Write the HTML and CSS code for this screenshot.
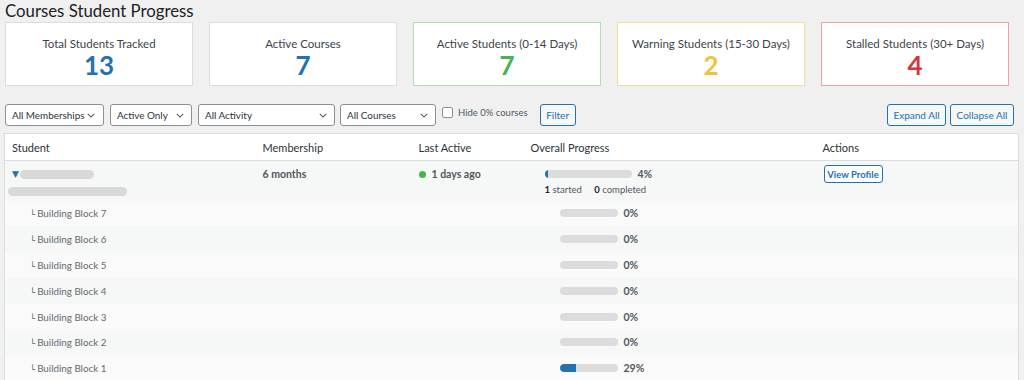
FILE: index.html
```html
<!DOCTYPE html>
<html>
<head>
<meta charset="utf-8">
<link rel="stylesheet" href="styles.css">
</head>
<body>
<div class="page">
  <h1 class="title">Courses Student Progress</h1>
  <div class="cards">
    <div class="card"><div class="card-label">Total Students Tracked</div><div class="card-num num-blue">13</div></div>
    <div class="card"><div class="card-label">Active Courses</div><div class="card-num num-blue">7</div></div>
    <div class="card card-green"><div class="card-label">Active Students (0-14 Days)</div><div class="card-num num-green">7</div></div>
    <div class="card card-yellow"><div class="card-label">Warning Students (15-30 Days)</div><div class="card-num num-yellow">2</div></div>
    <div class="card card-red"><div class="card-label">Stalled Students (30+ Days)</div><div class="card-num num-red">4</div></div>
  </div>
  <div class="toolbar">
    <div class="filters">
      <div class="select sel-1"><span>All Memberships</span><svg class="chev" viewBox="0 0 10 6"><path d="M1 1l4 4 4-4" fill="none" stroke="#50575e" stroke-width="1.3"/></svg></div>
      <div class="select sel-2"><span>Active Only</span><svg class="chev" viewBox="0 0 10 6"><path d="M1 1l4 4 4-4" fill="none" stroke="#50575e" stroke-width="1.3"/></svg></div>
      <div class="select sel-3"><span>All Activity</span><svg class="chev" viewBox="0 0 10 6"><path d="M1 1l4 4 4-4" fill="none" stroke="#50575e" stroke-width="1.3"/></svg></div>
      <div class="select sel-4"><span>All Courses</span><svg class="chev" viewBox="0 0 10 6"><path d="M1 1l4 4 4-4" fill="none" stroke="#50575e" stroke-width="1.3"/></svg></div>
      <label class="check"><span class="box"></span><span>Hide 0% courses</span></label>
      <button class="btn btn-filter">Filter</button>
    </div>
    <div class="toggles">
      <button class="btn btn-expand">Expand All</button>
      <button class="btn btn-collapse">Collapse All</button>
    </div>
  </div>
  <table class="grid">
    <colgroup>
      <col class="c-student"><col class="c-member"><col class="c-last"><col class="c-prog"><col class="c-act">
    </colgroup>
    <thead>
      <tr><th>Student</th><th>Membership</th><th>Last Active</th><th>Overall Progress</th><th>Actions</th></tr>
    </thead>
    <tbody>
      <tr class="main-row">
        <td class="student-cell">
          <div class="name-line"><span class="tri">&#9660;</span><span class="pill pill-a"></span></div>
          <div class="pill pill-b"></div>
        </td>
        <td class="member">6 months</td>
        <td class="last"><span class="dot"></span>1 days ago</td>
        <td class="prog">
          <div class="prog-line main-prog"><div class="bar bar-main"><div class="fill" style="width:4%"></div></div><span class="pct">4%</span></div>
          <div class="counts"><b>1</b> started <b class="gap">0</b> completed</div>
        </td>
        <td class="act"><button class="btn btn-view">View Profile</button></td>
      </tr>
      <tr class="sub odd"><td class="course"><span class="corner">&#9492;</span>Building Block 7</td><td></td><td></td><td><div class="prog-line sub-prog"><div class="bar bar-sub"><div class="fill" style="width:0%"></div></div><span class="pct">0%</span></div></td><td></td></tr>
      <tr class="sub even"><td class="course"><span class="corner">&#9492;</span>Building Block 6</td><td></td><td></td><td><div class="prog-line sub-prog"><div class="bar bar-sub"><div class="fill" style="width:0%"></div></div><span class="pct">0%</span></div></td><td></td></tr>
      <tr class="sub odd"><td class="course"><span class="corner">&#9492;</span>Building Block 5</td><td></td><td></td><td><div class="prog-line sub-prog"><div class="bar bar-sub"><div class="fill" style="width:0%"></div></div><span class="pct">0%</span></div></td><td></td></tr>
      <tr class="sub even"><td class="course"><span class="corner">&#9492;</span>Building Block 4</td><td></td><td></td><td><div class="prog-line sub-prog"><div class="bar bar-sub"><div class="fill" style="width:0%"></div></div><span class="pct">0%</span></div></td><td></td></tr>
      <tr class="sub odd"><td class="course"><span class="corner">&#9492;</span>Building Block 3</td><td></td><td></td><td><div class="prog-line sub-prog"><div class="bar bar-sub"><div class="fill" style="width:0%"></div></div><span class="pct">0%</span></div></td><td></td></tr>
      <tr class="sub even"><td class="course"><span class="corner">&#9492;</span>Building Block 2</td><td></td><td></td><td><div class="prog-line sub-prog"><div class="bar bar-sub"><div class="fill" style="width:0%"></div></div><span class="pct">0%</span></div></td><td></td></tr>
      <tr class="sub odd"><td class="course"><span class="corner">&#9492;</span>Building Block 1</td><td></td><td></td><td><div class="prog-line sub-prog"><div class="bar bar-sub"><div class="fill" style="width:29%"></div></div><span class="pct">29%</span></div></td><td></td></tr>
    </tbody>
  </table>
</div>
</body>
</html>
```
FILE: styles.css
```css
* { box-sizing: border-box; }
html, body { margin: 0; padding: 0; }
body {
  background: #f0f0f1;
  font-family: "Lato", "Liberation Sans", sans-serif;
  color: #3c434a;
  font-size: 11px;
  overflow: hidden;
  height: 380px;
}
.page { padding: 0 5px 0 4px; }
.title {
  margin: 0 0 0 1px;
  font-size: 16.8px;
  font-weight: 400;
  line-height: 22px;
  color: #1d2327;
}
.cards {
  display: grid;
  grid-template-columns: repeat(5, 188px);
  gap: 16px;
  margin-left: 1px;
}
.card {
  height: 64px;
  background: #fff;
  border: 1px solid #dcdcde;
  display: flex;
  flex-direction: column;
  align-items: center;
  justify-content: center;
  padding-top: 7px;
}
.card-green { border-color: #ade0ad; }
.card-yellow { border-color: #f4dd93; }
.card-red { border-color: #eba3a4; }
.card-label { font-size: 11.5px; color: #3c434a; line-height: 14px; }
.card-num { font-size: 26px; font-weight: 700; line-height: 28px; }
.num-blue { color: #2271b1; }
.num-green { color: #46b450; }
.num-yellow { color: #f0c33c; }
.num-red { color: #d63638; }

.toolbar {
  display: flex;
  justify-content: space-between;
  align-items: flex-start;
  margin-top: 18px;
  height: 22px;
}
.filters { display: flex; align-items: flex-start; margin-left: 1px; }
.select {
  height: 22px;
  background: #fff;
  border: 1px solid #8c8f94;
  border-radius: 3px;
  display: flex;
  align-items: center;
  justify-content: space-between;
  padding: 0 7px 0 6px;
  font-size: 9.9px;
  color: #2c3338;
  margin-right: 6px;
  white-space: nowrap;
}
.chev { width: 8px; height: 5px; flex: none; }
.sel-1 { width: 99px; padding-right: 8px; }
.sel-2 { width: 82px; }
.sel-3 { width: 137px; margin-right: 5px; }
.sel-4 { width: 96px; margin-right: 6px; }
.check { display: flex; align-items: center; height: 14px; margin-top: 1px; font-size: 9.5px; color: #50575e; white-space: nowrap; }
.box {
  width: 11px; height: 11px;
  border: 1px solid #8c8f94;
  border-radius: 2px;
  background: #fff;
  margin-right: 5px;
}
.btn {
  height: 22px;
  border: 1px solid #2271b1;
  border-radius: 3px;
  background: #f6f7f7;
  color: #2271b1;
  font-family: inherit;
  font-size: 10px;
  padding: 0;
  cursor: pointer;
  white-space: nowrap;
}
.btn-filter { margin-left: 12px; width: 36px; }
.btn-expand { width: 59px; }
.btn-collapse { width: 64px; }
.toggles { display: flex; gap: 4px; margin-right: 5px; }

.grid {
  width: 100%;
  border-collapse: collapse;
  table-layout: fixed;
  margin-top: 7px;
  border: 1px solid #dcdcde;
  background: #fff;
}
.c-student { width: 251px; }
.c-member { width: 156px; }
.c-last { width: 112px; }
.c-prog { width: 292px; }
.c-act { width: auto; }
th {
  text-align: left;
  font-weight: 400;
  font-size: 11px;
  color: #2c3338;
  height: 27px;
  padding: 1px 7px 0;
  border-bottom: 1px solid #dcdcde;
  vertical-align: middle;
}
td { padding: 0 7px; vertical-align: top; }
.main-row { background: #f6f7f7; height: 40px; }
.main-row td { padding-top: 6px; }
.student-cell { padding-left: 3px !important; }
.name-line { display: flex; align-items: center; height: 14px; }
.tri { color: #2271b1; font-size: 9px; line-height: 14px; margin-left: 4px; margin-right: 1px; font-family: "DejaVu Sans", sans-serif; }
.pill { background: #d9d9da; border-radius: 5px; height: 9px; }
.pill-a { width: 74px; }
.pill-b { width: 119px; margin-top: 6px; }
.member { font-weight: 700; font-size: 10.5px; color: #50575e; line-height: 14px; }
.last { font-weight: 700; font-size: 10.5px; color: #50575e; line-height: 14px; }
.dot { display: inline-block; width: 7px; height: 7px; border-radius: 50%; background: #46b450; margin-right: 6px; vertical-align: 0; }
.prog-line { display: flex; align-items: center; height: 14px; }
.main-prog { margin-left: 14px; }
.bar { height: 8px; background: #dcdcde; border-radius: 4px; overflow: hidden; }
.bar-main { width: 87px; }
.bar-sub { width: 58px; }
.fill { height: 100%; background: #2271b1; border-radius: 4px 0 0 4px; }
.pct { font-weight: 700; font-size: 10.5px; color: #50575e; margin-left: 6px; }
.counts { margin-left: 14px; margin-top: 3px; font-size: 9.5px; color: #50575e; }
.counts b { color: #1d2327; }
.counts .gap { margin-left: 10px; }
.act { padding-left: 8px !important; padding-top: 4px !important; }
.btn-view { height: 18px; width: 59px; font-size: 9.5px; font-weight: 700; background: #fff; }
.sub { height: 25.8px; }
.sub td { vertical-align: middle; padding-top: 0; padding-bottom: 0; }
.sub.odd { background: #fafafa; }
.sub.even { background: #f6f7f7; }
.course { padding-left: 25px !important; font-size: 9.8px; color: #646970; white-space: nowrap; }
.corner { font-size: 8.5px; margin-right: 2px; font-family: "DejaVu Sans", sans-serif; color: #50575e; }
.sub-prog { margin-left: 29px; }
```
